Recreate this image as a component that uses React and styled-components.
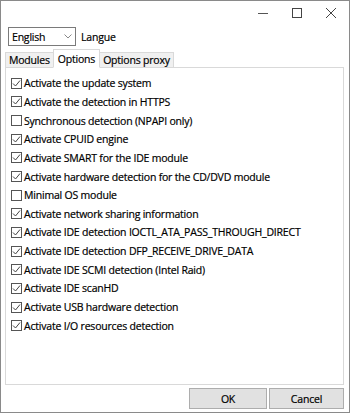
import React from "react";
import styled, { createGlobalStyle } from "styled-components";

const Global = createGlobalStyle`
  html, body { margin: 0; padding: 0; background: #fff; }
  body { font-family: "Open Sans", "Noto Sans", sans-serif; }
  * { box-sizing: border-box; }
`;

const Window = styled.div`
  width: 350px;
  height: 413px;
  border: 1px solid #8a8a8a;
  background: #fff;
  display: flex;
  flex-direction: column;
  font-size: 10.5px;
  letter-spacing: -0.2px;
  color: #000;
  -webkit-text-stroke: 0.2px #000;
`;

const TitleBar = styled.div`
  height: 24px;
  display: flex;
  justify-content: flex-end;
  align-items: stretch;
  padding-right: 1px;
`;

const TitleButton = styled.div`
  width: 34px;
  display: flex;
  align-items: center;
  justify-content: center;
`;

const Body = styled.div`
  flex: 1;
  display: flex;
  flex-direction: column;
  padding: 2px 5px 3px 4px;
`;

const LangRow = styled.div`
  display: flex;
  align-items: center;
  gap: 5px;
  margin-left: 3px;
  height: 19px;
`;

const Select = styled.div`
  width: 68px;
  height: 19px;
  border: 1px solid #7a7a7a;
  background: #fff;
  display: flex;
  align-items: center;
  justify-content: space-between;
  padding: 0 3px 0 3px;
`;

const TabStrip = styled.div`
  display: flex;
  align-items: flex-end;
  height: 18px;
  margin-top: 3px;
  position: relative;
  z-index: 1;
`;

const Tab = styled.div`
  height: ${(p) => (p.$active ? "19px" : "15px")};
  padding: 0 ${(p) => (p.$active ? "4px" : "3px")};
  margin: 0 ${(p) => (p.$active ? "-1px" : "0")};
  background: ${(p) => (p.$active ? "#fff" : "#f0f0f0")};
  border: 1px solid #d9d9d9;
  border-bottom: ${(p) => (p.$active ? "1px solid #fff" : "none")};
  margin-bottom: ${(p) => (p.$active ? "-1px" : "0")};
  display: flex;
  align-items: center;
  position: relative;
  z-index: ${(p) => (p.$active ? 2 : 1)};
`;

const Panel = styled.div`
  flex: 1;
  border: 1px solid #d9d9d9;
  background: #fff;
  padding: 6px 0 0 5px;
  display: flex;
  flex-direction: column;
`;

const Row = styled.label`
  display: flex;
  align-items: center;
  height: 18.65px;
  gap: 2px;
  white-space: nowrap;
`;

const Box = styled.span`
  width: 11px;
  height: 11px;
  border: 1px solid #555;
  background: #fff;
  display: inline-flex;
  align-items: center;
  justify-content: center;
  flex: none;
`;

const Footer = styled.div`
  display: flex;
  justify-content: flex-end;
  gap: 2px;
  padding-top: 3px;
`;

const Button = styled.div`
  width: ${(p) => p.$w}px;
  height: 21px;
  background: #e1e1e1;
  border: 1px solid #adadad;
  display: flex;
  align-items: center;
  justify-content: center;
`;

const Check = () => (
  <svg width="9" height="9" viewBox="0 0 9 9">
    <path d="M1 4.5 L3.5 7 L8 1.5" fill="none" stroke="#444" strokeWidth="1" />
  </svg>
);

const items = [
  ["Activate the update system", true],
  ["Activate the detection in HTTPS", true],
  ["Synchronous detection (NPAPI only)", false],
  ["Activate CPUID engine", true],
  ["Activate SMART for the IDE module", true],
  ["Activate hardware detection for the CD/DVD module", true],
  ["Minimal OS module", false],
  ["Activate network sharing information", true],
  ["Activate IDE detection IOCTL_ATA_PASS_THROUGH_DIRECT", true],
  ["Activate IDE detection DFP_RECEIVE_DRIVE_DATA", true],
  ["Activate IDE SCMI detection (Intel Raid)", true],
  ["Activate IDE scanHD", true],
  ["Activate USB hardware detection", true],
  ["Activate I/O resources detection", true],
];

export default function App() {
  return (
    <>
      <Global />
      <Window>
        <TitleBar>
          <TitleButton>
            <svg width="10" height="10" viewBox="0 0 10 10">
              <path d="M0 5.5 H10" stroke="#555" strokeWidth="1" />
            </svg>
          </TitleButton>
          <TitleButton>
            <svg width="10" height="10" viewBox="0 0 10 10">
              <rect x="0.5" y="0.5" width="9" height="9" fill="none" stroke="#444" strokeWidth="1" />
            </svg>
          </TitleButton>
          <TitleButton>
            <svg width="10" height="10" viewBox="0 0 10 10">
              <path d="M0 0 L10 10 M10 0 L0 10" stroke="#444" strokeWidth="1" />
            </svg>
          </TitleButton>
        </TitleBar>
        <Body>
          <LangRow>
            <Select>
              <span>English</span>
              <svg width="8" height="5" viewBox="0 0 8 5">
                <path d="M0.5 0.5 L4 4 L7.5 0.5" fill="none" stroke="#888" strokeWidth="1" />
              </svg>
            </Select>
            <span>Langue</span>
          </LangRow>
          <TabStrip>
            <Tab>Modules</Tab>
            <Tab $active>Options</Tab>
            <Tab>Options proxy</Tab>
          </TabStrip>
          <Panel>
            {items.map(([t, c]) => (
              <Row key={t}>
                <Box>{c && <Check />}</Box>
                <span>{t}</span>
              </Row>
            ))}
          </Panel>
          <Footer>
            <Button $w={78}>OK</Button>
            <Button $w={75}>Cancel</Button>
          </Footer>
        </Body>
      </Window>
    </>
  );
}
